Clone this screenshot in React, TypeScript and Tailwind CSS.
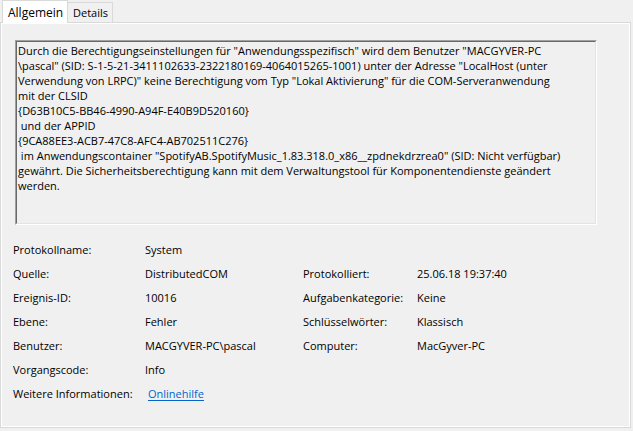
import React from "react";

const lines = [
  'Durch die Berechtigungseinstellungen für "Anwendungsspezifisch" wird dem Benutzer "MACGYVER-PC',
  '\\pascal" (SID: S-1-5-21-3411102633-2322180169-4064015265-1001) unter der Adresse "LocalHost (unter',
  'Verwendung von LRPC)" keine Berechtigung vom Typ "Lokal Aktivierung" für die COM-Serveranwendung',
  "mit der CLSID",
  "{D63B10C5-BB46-4990-A94F-E40B9D520160}",
  " und der APPID",
  "{9CA88EE3-ACB7-47C8-AFC4-AB702511C276}",
  ' im Anwendungscontainer "SpotifyAB.SpotifyMusic_1.83.318.0_x86__zpdnekdrzrea0" (SID: Nicht verfügbar)',
  "gewährt. Die Sicherheitsberechtigung kann mit dem Verwaltungstool für Komponentendienste geändert",
  "werden.",
];

type Row = { l: string; v: React.ReactNode; l2?: string; v2?: string };

const rows: Row[] = [
  { l: "Protokollname:", v: "System" },
  { l: "Quelle:", v: "DistributedCOM", l2: "Protokolliert:", v2: "25.06.18 19:37:40" },
  { l: "Ereignis-ID:", v: "10016", l2: "Aufgabenkategorie:", v2: "Keine" },
  { l: "Ebene:", v: "Fehler", l2: "Schlüsselwörter:", v2: "Klassisch" },
  { l: "Benutzer:", v: "MACGYVER-PC\\pascal", l2: "Computer:", v2: "MacGyver-PC" },
  { l: "Vorgangscode:", v: "Info" },
  {
    l: "Weitere Informationen:",
    v: (
      <span className="ml-[3px] text-[#0066cc] underline underline-offset-2">Onlinehilfe</span>
    ),
  },
];

export default function App() {
  return (
    <div
      className="w-[633px] h-[431px] bg-[#f0f0f0] text-[11px] leading-[15px] text-black overflow-hidden"
      style={{ fontFamily: '"Open Sans", "Liberation Sans", Arial, sans-serif' }}
    >
      {/* Tabs */}
      <div className="flex items-end h-[22px] pl-[2px]">
        <div className="relative z-10 -mb-px h-[23px] w-[66px] bg-white border-l border-t border-r border-[#d9d9d9] pl-[5px] flex items-center text-[12px]">
          Allgemein
        </div>
        <div className="h-[20px] w-[45px] bg-[#f0f0f0] border-t border-r border-[#d9d9d9] pl-[5px] flex items-center">
          Details
        </div>
      </div>
      {/* Panel */}
      <div className="w-[631px] h-[406px] border border-[#d9d9d9] bg-white p-px">
        <div className="w-full h-full bg-[#f0f0f0] pt-[16px]">
          <div className="ml-[13px] w-[582px] h-[185px] border-t border-l border-b border-r border-t-[#a0a0a0] border-l-[#a0a0a0] border-b-white border-r-white">
            <div className="w-full h-full border border-t-[#696969] border-l-[#696969] border-b-[#e3e3e3] border-r-[#e3e3e3] pl-[1px] pt-[1px]">
              {lines.map((t, i) => (
                <div key={i} className="whitespace-pre h-[15px]">
                  {t}
                </div>
              ))}
            </div>
          </div>
          <div className="mt-[12px] ml-[11px]">
            {rows.map((r, i) => (
              <div key={i} className="flex h-[24px] items-center whitespace-nowrap">
                <div className="w-[132px]">{r.l}</div>
                <div className="w-[158px]">{r.v}</div>
                <div className="w-[114px]">{r.l2 ?? ""}</div>
                <div>{r.v2 ?? ""}</div>
              </div>
            ))}
          </div>
        </div>
      </div>
    </div>
  );
}
